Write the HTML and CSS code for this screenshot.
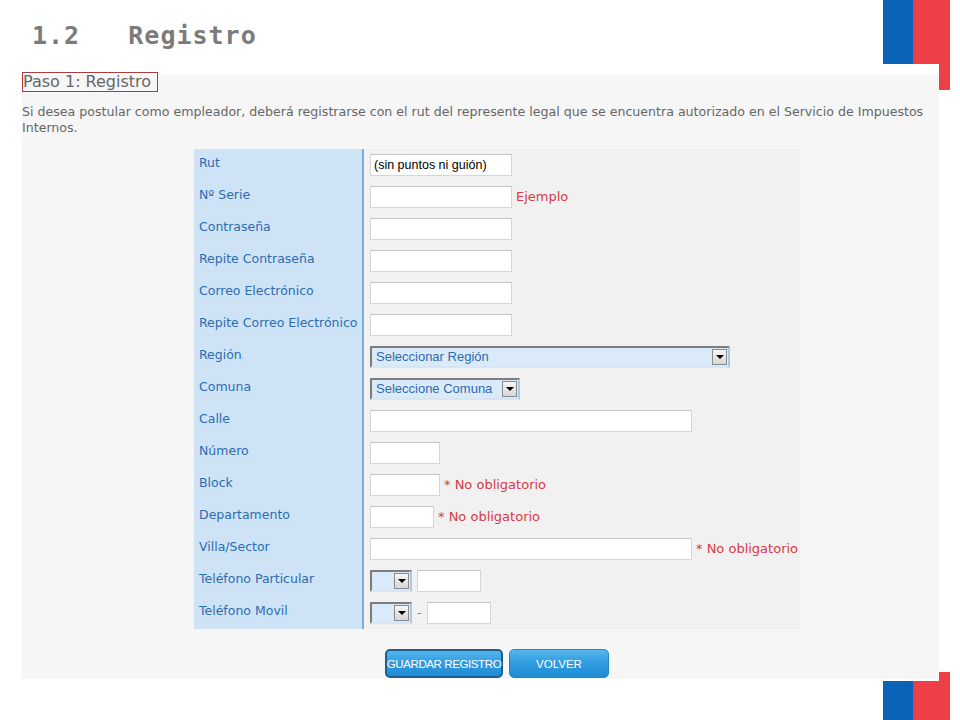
FILE: index.html
```html
<!DOCTYPE html>
<html lang="es">
<head>
<meta charset="utf-8">
<title>Registro</title>
<link rel="stylesheet" href="styles.css">
</head>
<body>
<div class="page">
  <div class="flag flag-top"><span class="f-blue"></span><span class="f-red"></span></div>
  <h1 class="title">1.2   Registro</h1>
  <div class="panel">
    <div class="step">Paso 1: Registro</div>
    <p class="intro">Si desea postular como empleador, deberá registrarse con el rut del represente legal que se encuentra autorizado en el Servicio de Impuestos Internos.</p>
    <div class="form">
      <div class="label">Rut</div>
      <div class="field"><div class="input w142 filled">(sin puntos ni guión)</div></div>

      <div class="label">Nº Serie</div>
      <div class="field"><div class="input w142"></div><span class="note">Ejemplo</span></div>

      <div class="label">Contraseña</div>
      <div class="field"><div class="input w142"></div></div>

      <div class="label">Repite Contraseña</div>
      <div class="field"><div class="input w142"></div></div>

      <div class="label">Correo Electrónico</div>
      <div class="field"><div class="input w142"></div></div>

      <div class="label">Repite Correo Electrónico</div>
      <div class="field"><div class="input w142"></div></div>

      <div class="label">Región</div>
      <div class="field"><div class="select w360"><span>Seleccionar Región</span><span class="arrow"></span></div></div>

      <div class="label">Comuna</div>
      <div class="field"><div class="select w150"><span>Seleccione Comuna</span><span class="arrow"></span></div></div>

      <div class="label">Calle</div>
      <div class="field"><div class="input w322"></div></div>

      <div class="label">Número</div>
      <div class="field"><div class="input w70"></div></div>

      <div class="label">Block</div>
      <div class="field"><div class="input w70"></div><span class="note">* No obligatorio</span></div>

      <div class="label">Departamento</div>
      <div class="field"><div class="input w64"></div><span class="note">* No obligatorio</span></div>

      <div class="label">Villa/Sector</div>
      <div class="field"><div class="input w322"></div><span class="note">* No obligatorio</span></div>

      <div class="label">Teléfono Particular</div>
      <div class="field gap5"><div class="select w42"><span></span><span class="arrow"></span></div><div class="input w64"></div></div>

      <div class="label">Teléfono Movil</div>
      <div class="field gap5"><div class="select w42"><span></span><span class="arrow"></span></div><span class="dash">-</span><div class="input w64"></div></div>
    </div>
    <div class="actions">
      <button class="btn btn-save" type="button">GUARDAR REGISTRO</button>
      <button class="btn btn-back" type="button">VOLVER</button>
    </div>
  </div>
  <div class="flag flag-bottom"><span class="f-blue"></span><span class="f-red"></span></div>
</div>
</body>
</html>
```

FILE: styles.css
```css
* { box-sizing: border-box; }

body {
  margin: 0;
  background: #ffffff;
  font-family: "DejaVu Sans", Verdana, sans-serif;
}

.page {
  position: relative;
  width: 960px;
  height: 720px;
  overflow: hidden;
}

/* corner flag decoration */
.flag {
  position: absolute;
  left: 883px;
  display: flex;
}
.flag-top { top: 0; height: 64px; }
.flag-bottom { top: 681px; height: 39px; }
.f-blue { width: 30px; background: #0a63b6; }
.f-red { width: 37px; background: #ef3f46; }
.flag::after {
  content: "";
  position: absolute;
  right: 0;
  width: 11px;
  background: #ef3f46;
}
.flag-top::after { top: 64px; height: 26px; }
.flag-bottom::after { top: -9px; height: 9px; }

.title {
  margin: 0;
  padding: 21px 0 0 32px;
  font: bold 25px/30px "DejaVu Sans Mono", monospace;
  letter-spacing: 1px;
  color: #7b7b7b;
  white-space: pre;
}

.panel {
  display: flow-root;
  margin: 24px 0 0 22px;
  width: 917px;
  height: 604px;
  background: #f6f6f6;
}

.step {
  display: block;
  width: 136px;
  height: 20px;
  margin-top: -3px;
  border: 1px solid #b4393e;
  padding: 0;
  font-size: 16px;
  line-height: 18px;
  color: #666666;
  white-space: nowrap;
}

.intro {
  margin: 12px 0 0;
  font-size: 12.6px;
  line-height: 16px;
  color: #666666;
}

.form {
  margin: 13px 0 0 172px;
  width: 606px;
  display: grid;
  grid-template-columns: 168px 1fr;
  background: #f1f1f1;
}

.label {
  height: 32px;
  padding: 6px 0 0 5px;
  background: #cee3f6;
  color: #2c6cb2;
  font-size: 12.5px;
  line-height: 16px;
  white-space: nowrap;
}

.field {
  height: 32px;
  padding: 5px 0 0 6px;
  border-left: 2px solid #77aee2;
  display: flex;
  align-items: flex-start;
  gap: 4px;
}
.field.gap5 { gap: 5px; }

.input {
  height: 22px;
  border: 1px solid #d6d6d6;
  border-top-color: #c4c4c4;
  background: #ffffff;
}
.input.filled {
  padding: 0 3px;
  font: 12.5px/20px "Liberation Sans", Arial, sans-serif;
  color: #000000;
}

.w142 { width: 142px; }
.w322 { width: 322px; }
.w70 { width: 70px; }
.w64 { width: 64px; }
.w360 { width: 360px; }
.w150 { width: 150px; }
.w42 { width: 42px; }

.note {
  color: #d63c44;
  font-size: 13px;
  line-height: 22px;
  white-space: nowrap;
}

.dash {
  color: #888888;
  font-size: 13px;
  line-height: 22px;
}

.select {
  height: 22px;
  display: flex;
  align-items: center;
  justify-content: space-between;
  background: #dbeaf8;
  border: 2px solid;
  border-color: #7d7d7d #a9c8e6 #d6e6f5 #7d7d7d;
  padding: 0 1px 0 4px;
  color: #2c6cb2;
  font: 13px/18px "Liberation Sans", Arial, sans-serif;
  white-space: nowrap;
}

.arrow {
  width: 15px;
  height: 16px;
  border: 1px solid #8a8a8a;
  background: linear-gradient(#f6f6f6, #d6d6d6);
  display: flex;
  align-items: center;
  justify-content: center;
  flex: none;
}
.arrow::before {
  content: "";
  border-top: 4px solid #000000;
  border-left: 4px solid transparent;
  border-right: 4px solid transparent;
}

.actions {
  margin: 20px 0 0 172px;
  width: 606px;
  display: flex;
  justify-content: center;
  gap: 6px;
}

.btn {
  height: 29px;
  border-radius: 5px;
  border: 1px solid #2385c8;
  background: linear-gradient(#55b6ee, #2f9be0 50%, #1f8bd3);
  color: #ffffff;
  font: 11.5px "Liberation Sans", Arial, sans-serif;
  letter-spacing: -0.4px;
  white-space: nowrap;
  padding: 0;
  display: flex;
  align-items: center;
  justify-content: center;
}
.btn-save { width: 118px; border: 2px solid #1f5e90; }
.btn-back { width: 100px; letter-spacing: 0; }
```
